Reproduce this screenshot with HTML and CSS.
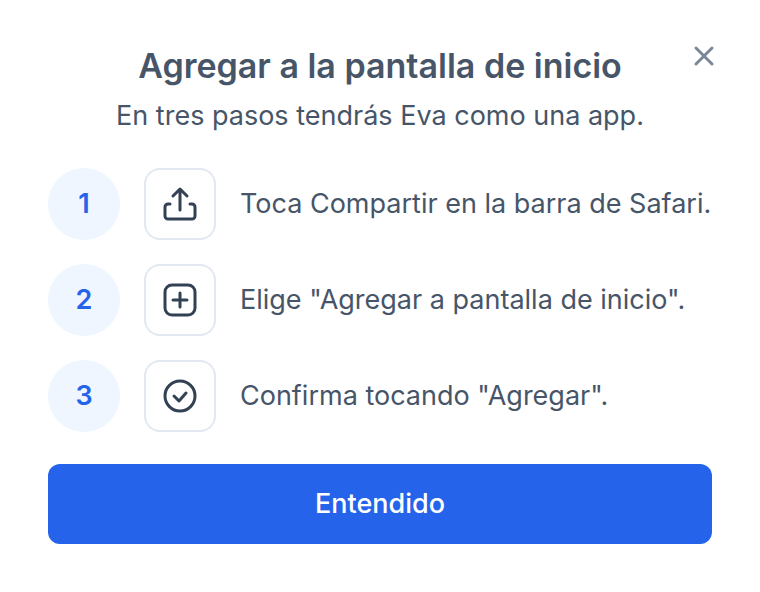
FILE: index.html
```html
<!DOCTYPE html>
<html lang="es">
<head>
  <meta charset="UTF-8">
  <meta name="viewport" content="width=device-width, initial-scale=1">
  <title>Agregar a la pantalla de inicio</title>
  <link rel="stylesheet" href="styles.css">
</head>
<body>
  <main class="sheet">
    <button class="close" type="button" aria-label="Cerrar">
      <svg viewBox="0 0 32 32" aria-hidden="true">
        <path d="M8 8l16 16M24 8L8 24"/>
      </svg>
    </button>

    <header>
      <h1>Agregar a la pantalla de inicio</h1>
      <p>En tres pasos tendrás Eva como una app.</p>
    </header>

    <ol class="steps">
      <li>
        <span class="number">1</span>
        <span class="icon">
          <svg viewBox="0 0 40 40" aria-hidden="true">
            <path d="M20 26V5M13 12l7-7 7 7"/>
            <path d="M10 20H8a3 3 0 0 0-3 3v9a3 3 0 0 0 3 3h24a3 3 0 0 0 3-3v-9a3 3 0 0 0-3-3h-2"/>
          </svg>
        </span>
        <span class="text">Toca Compartir en la barra de Safari.</span>
      </li>
      <li>
        <span class="number">2</span>
        <span class="icon">
          <svg viewBox="0 0 40 40" aria-hidden="true">
            <rect x="5" y="5" width="30" height="30" rx="7"/>
            <path d="M20 13v14M13 20h14"/>
          </svg>
        </span>
        <span class="text">Elige "Agregar a pantalla de inicio".</span>
      </li>
      <li>
        <span class="number">3</span>
        <span class="icon">
          <svg viewBox="0 0 40 40" aria-hidden="true">
            <circle cx="20" cy="20" r="15"/>
            <path d="M14 20l5 5 7-8"/>
          </svg>
        </span>
        <span class="text">Confirma tocando "Agregar".</span>
      </li>
    </ol>

    <button class="confirm" type="button">Entendido</button>
  </main>
</body>
</html>
```
FILE: styles.css
```css
* {
  box-sizing: border-box;
}
body {
  margin: 0;
  background: #fff;
  color: #475569;
  font-family: Inter, "Liberation Sans", sans-serif;
  font-size: 27px;
  line-height: 40px;
}
.sheet {
  position: relative;
  padding: 48px;
}
header {
  text-align: center;
}
h1 {
  margin: 0 0 12px;
  font-size: 34px;
  font-weight: 600;
  line-height: 36px;
}
p {
  margin: 0;
}
svg {
  display: block;
  fill: none;
  stroke: currentColor;
  stroke-linecap: round;
  stroke-linejoin: round;
}
.close {
  position: absolute;
  top: 40px;
  right: 40px;
  padding: 0;
  border: none;
  background: none;
  color: #7b8798;
  cursor: pointer;
}
.close svg {
  width: 32px;
  height: 32px;
  stroke-width: 3;
}
.steps {
  display: flex;
  flex-direction: column;
  gap: 24px;
  margin: 32px 0;
  padding: 0;
  list-style: none;
}
.steps li {
  display: flex;
  align-items: center;
  gap: 24px;
}
.number,
.icon {
  display: flex;
  flex: none;
  align-items: center;
  justify-content: center;
  width: 72px;
  height: 72px;
}
.number {
  border-radius: 50%;
  background: #eff6ff;
  color: #2563eb;
  font-weight: 600;
}
.icon {
  border: 2px solid #e2e8f0;
  border-radius: 16px;
  color: #334155;
}
.icon svg {
  width: 40px;
  height: 40px;
  stroke-width: 3;
}
.confirm {
  display: block;
  width: 100%;
  padding: 20px;
  border: none;
  border-radius: 12px;
  background: #2563eb;
  color: #fff;
  font: inherit;
  font-weight: 500;
  cursor: pointer;
}
```
